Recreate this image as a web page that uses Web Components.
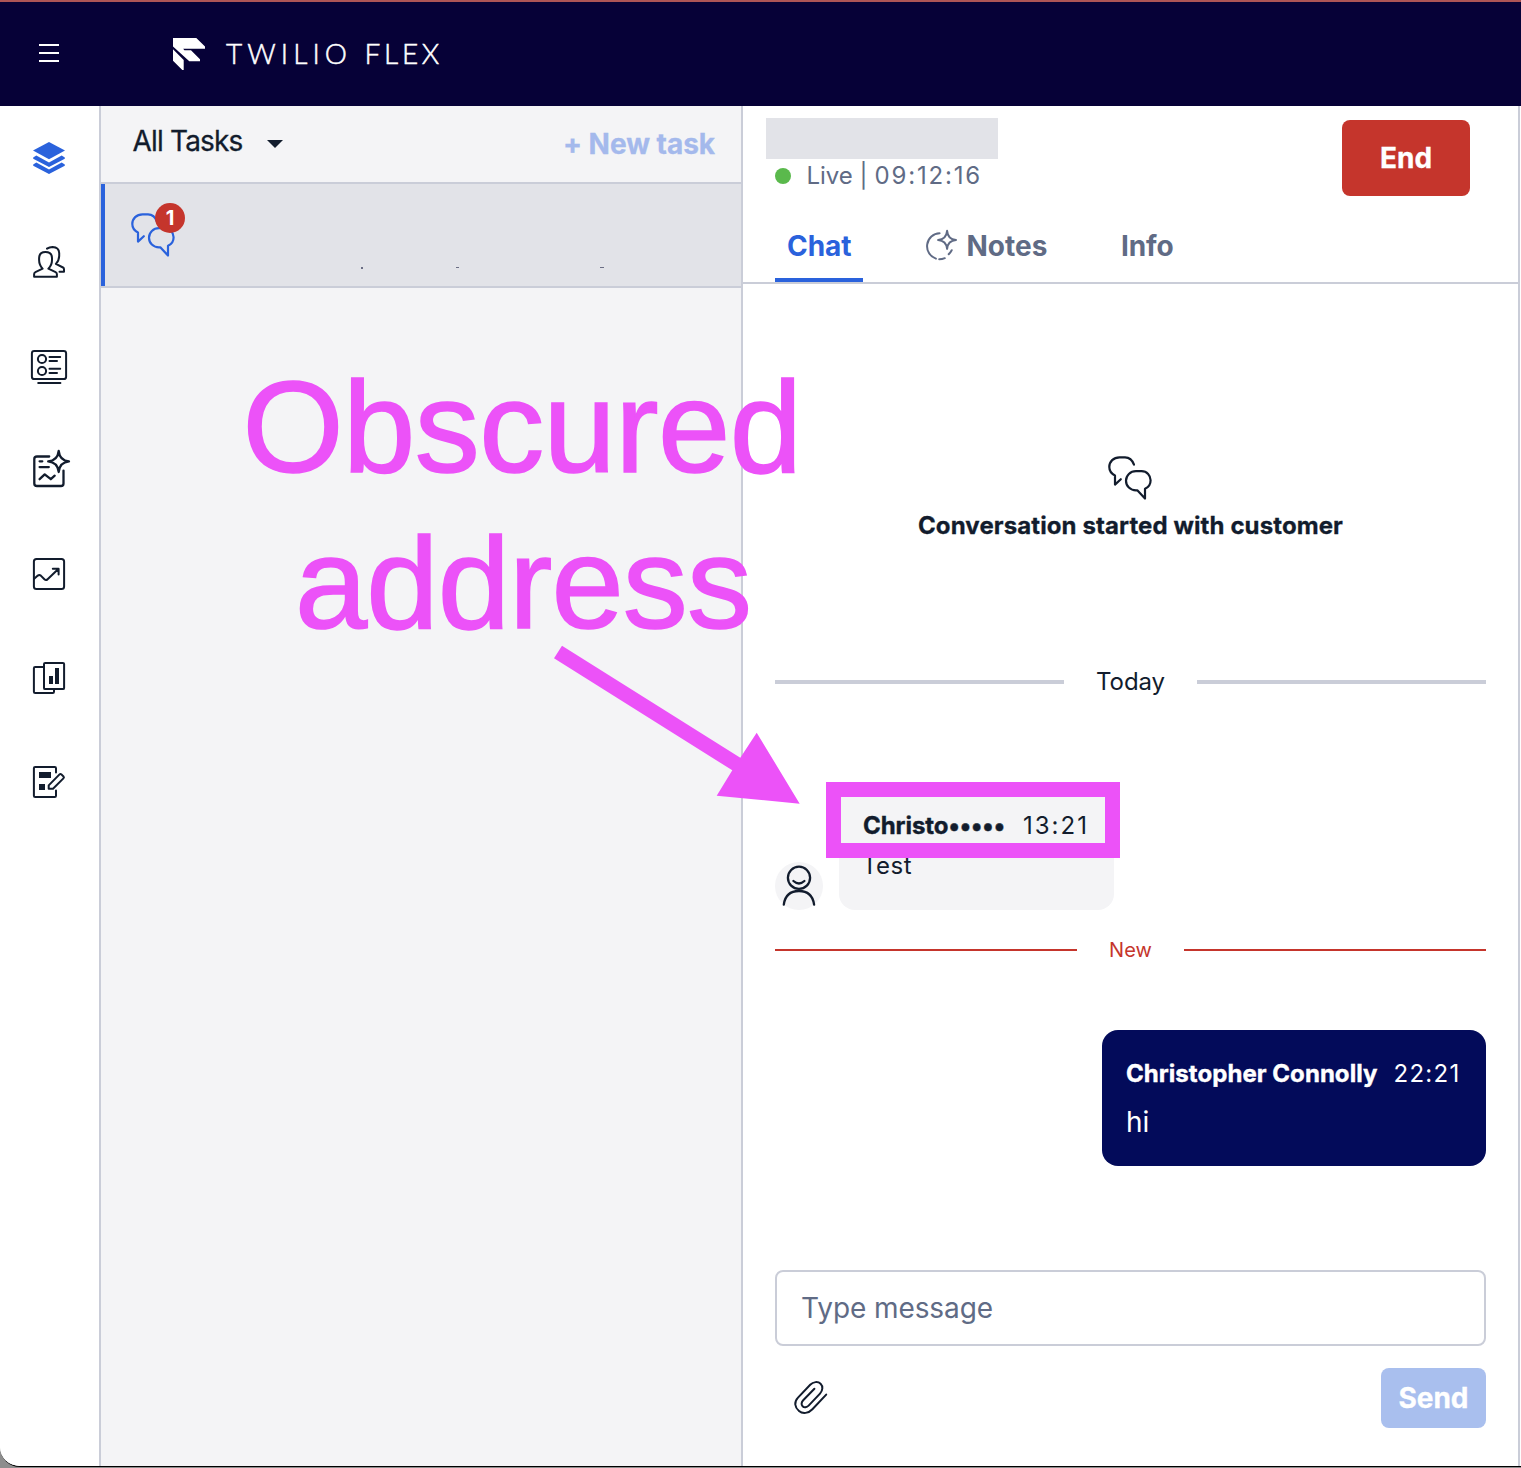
<!DOCTYPE html>
<html lang="en">
<head>
<meta charset="utf-8">
<title>Twilio Flex</title>
<style>
html,body{margin:0;padding:0;background:#8d8d8d;font-family:Inter,"Liberation Sans",sans-serif;color:#121c2d}
body{width:1521px;height:1468px;overflow:hidden}
</style>
</head>
<body>
<flex-app></flex-app>
<script>
const define = (name, html, ready) => customElements.define(name, class extends HTMLElement {
  constructor() {
    super();
    this.attachShadow({ mode: 'open' });
  }
  connectedCallback() {
    if (this.shadowRoot.childNodes.length) return;
    const t = document.createElement('template');
    t.innerHTML = typeof html === 'function' ? html(this) : html;
    this.shadowRoot.append(t.content.cloneNode(true));
    if (ready) ready(this);
  }
});

/* Text label tracked to a given advance width */
define('ui-text', `<style>:host{display:block;white-space:pre;line-height:1;flex:none}</style><slot></slot>`, el => {
  const w = parseFloat(el.getAttribute('w'));
  el.style.width = 'max-content';
  const n = el.textContent.length;
  const natural = el.getBoundingClientRect().width;
  el.style.letterSpacing = ((w - natural) / n).toFixed(3) + 'px';
  el.style.width = w + 'px';
});

const bubbles = '<path d="M26 8.7C24.3 3.8 21 1.3 17 1.3H11.5C5.5 1.3 1.3 5.6 1.3 11C1.3 15.2 3.6 17.8 7 19.4V28.6L12.8 23.2M28 15.2H33.5C39 15.2 42.6 19.5 42.6 24.3C42.6 28.3 40.6 31.3 37 32.8V42.6L29.3 34.3H28C22.3 34.3 18 30 18 24.7C18 19.5 22.3 15.2 28 15.2Z"/>';
const ICONS = {
  layers: [44, '<g fill="currentColor" stroke="none"><path d="M22 6L38 14.4L22 23.2L6 14.4Z"/><path d="M6.2 21.4L9.3 19.6L22 26.5L34.7 19.6L37.8 21.4V22.8L22 31L6.2 22.8Z"/><path d="M6.2 28.4L9.3 26.6L22 33.5L34.7 26.6L37.8 28.4V29.8L22 38L6.2 29.8Z"/></g>'],
  people: [44, '<path d="M7.1 36.8V34.2Q7.1 32.8 8.4 32.2L15.6 28.7Q12.1 25 12.1 20V18Q12.3 12 18.4 12Q24.9 12 25 18V20Q25 25 21.4 28.7L28.6 32.2Q29.9 32.8 29.9 34.2V36.8ZM20 8.6Q22.4 6.9 25.6 6.9Q32 7.1 32.2 13V16Q32.1 20.4 28.9 23.9L36 27.5Q37 28 37 29.2V31.8H32.5"/>'],
  board: [44, '<rect x="4.9" y="6.9" width="34.2" height="28.2" rx="2.4"/><circle cx="15" cy="15" r="4.1"/><circle cx="15" cy="27" r="4.1"/><path d="M22.5 13H33.2M22.5 16.9H30M22.5 24.8H33.2M22.5 28.9H30M11.2 39H33.4"/>'],
  insight: [44, '<path d="M22.2 8.5H10Q7.3 8.5 7.3 11V35.4Q7.3 38 10 38H34Q36.5 38 36.5 35.4V22.6M12.6 13.3H15.3M12.6 19.1H21.8M12.6 31.2L17.7 26.4L23.8 31.2L27.7 27.7M31.7 2.8Q32.6 12.4 42 13.4Q32.6 14.4 31.7 24Q30.7 14.4 21.2 13.4Q30.7 12.4 31.7 2.8Z"/>'],
  trend: [44, '<rect x="6.9" y="6.9" width="30.2" height="30.2" rx="2.6"/><path d="M7.2 26.8L10.8 23.6Q12.3 22.4 13.8 23.6L17.4 27.3Q19 28.8 20.6 27.2L31.3 17M25.8 16.8H31.6V22.4"/>'],
  reports: [44, '<rect x="17" y="6.9" width="20.1" height="26.2" rx="1.2"/><path d="M17 11H8.2Q6.9 11 6.9 12.2V35.8Q6.9 37 8.2 37H25.8Q27 37 27 35.8V33.3"/><path d="M22 20H26V28H22ZM28 12H32V28H28Z" fill="currentColor" stroke="none"/>'],
  form: [44, '<path d="M29 12.5V8.2Q29 6.9 27.7 6.9H8.2Q6.9 6.9 6.9 8.2V35.8Q6.9 37 8.2 37H27.7Q29 37 29 35.8V30.4M21.7 28.7V25.4L32.3 14.6Q33.4 13.5 34.5 14.5L36.5 16.4Q37.4 17.4 36.4 18.4L26 28.7Z"/><path d="M12 12H24V18H12ZM12 24H18V30H12Z" fill="currentColor" stroke="none"/>'],
  bubbles: [44, bubbles],
  note: [32, '<path d="M14.6 3.3A13 13 0 0 0 10.9 28.6M14.2 29.3Q17.2 29.3 19.8 28.2M23.7 24.3Q25.6 22.3 26.7 20.2M22.1 .8Q22.8 9.2 31 10Q22.8 10.8 22.1 18.8Q21.3 10.8 13.1 10Q21.3 9.2 22.1 .8Z"/>'],
  clip: [36, '<path d="M34.2 14.6L20.4 29.2C16.4 33.4 10.8 34.2 7 31C2.6 27.2 1.8 22 6 17.6L18.2 4.8C21.2 1.6 26 1.2 28.6 3.8C31.2 6.4 30.8 10.6 28 13.6L16.6 25.6C14.8 27.4 12.2 27.8 10.6 26.2C9 24.6 9.4 22 11.2 20.2L22.4 8.8"/>'],
  avatar: [48, '<circle cx="24" cy="15.8" r="11.1"/><path d="M18.4 19Q24 24 29.4 19M8.8 42.6Q10.6 29 24 29Q37.2 29 39.1 42.6"/>'],
  logo: [32, '<path fill="currentColor" stroke="none" d="M0 0H23.3L32 8.6V10.7H10.2L11.4 12.3H18L27 21.3V23.3H16.3L0 8.5ZM0 11.3L10.7 22V32H9.3L0 22.7Z"/>'],
  menu: [20, '<path d="M0 2H20M0 10H20M0 18H20" stroke-linecap="butt"/>']
};
define('ui-icon', el => {
  const [s, body] = ICONS[el.getAttribute('name')];
  const sw = el.getAttribute('sw') || 2;
  return `<style>:host{display:block;flex:none;width:${s}px;height:${s}px}svg{display:block;overflow:visible}</style>
  <svg width="${s}" height="${s}" viewBox="0 0 ${s} ${s}" fill="none" stroke="currentColor" stroke-width="${sw}" stroke-linecap="round" stroke-linejoin="round">${body}</svg>`;
});

define('flex-header', `<style>
:host{display:flex;align-items:center;box-sizing:border-box;height:106px;background:#060137;border-top:2px solid #ad5556;color:#fff;padding:0 0 2px 39px;flex:none}
ui-icon[name=logo]{margin:2px 0 0 114px}
ui-text{font:300 28px/32px Lato,sans-serif;margin-left:21px;-webkit-text-stroke:.5px #fff}
ui-text+ui-text{margin-left:12.5px}
</style>
<ui-icon name="menu"></ui-icon><ui-icon name="logo"></ui-icon><ui-text w="126">TWILIO</ui-text><ui-text w="78.5">FLEX</ui-text>`);

define('nav-rail', `<style>
:host{display:flex;flex-direction:column;width:99px;border-right:2px solid #cacdd8;background:#fff;flex:none}
div{height:104px;width:98px;display:flex;align-items:center;justify-content:center}
.on{color:#2a62dc}
</style>
<div class="on"><ui-icon name="layers"></ui-icon></div>
<div><ui-icon name="people"></ui-icon></div>
<div><ui-icon name="board"></ui-icon></div>
<div><ui-icon name="insight" sw="2.3"></ui-icon></div>
<div><ui-icon name="trend"></ui-icon></div>
<div><ui-icon name="reports"></ui-icon></div>
<div><ui-icon name="form"></ui-icon></div>`);

define('task-item', `<style>
:host{display:flex;box-sizing:border-box;height:104px;background:#e2e3e8;box-shadow:inset 4px 0 #2a62dc;border-bottom:2px solid #cacdd8;padding:29px 0 0 30px}
.ic{position:relative;width:44px;height:44px;color:#2a62dc}
.badge{position:absolute;left:24px;top:-10px;width:30px;height:30px;border-radius:50%;background:#c5352c;color:#fff;display:flex;align-items:center;justify-content:center;font:700 20px/30px Inter,sans-serif}
.marks{display:flex;padding:54px 0 0 186px}
i{height:1px;background:#6b6e84}
</style>
<div class="ic"><ui-icon name="bubbles" sw="2.2"></ui-icon><span class="badge">1</span></div>
<div class="marks"><i style="width:2px;height:2px"></i><i style="width:3px;margin-left:93px"></i><i style="width:4px;margin-left:141px"></i></div>`);

define('task-list', `<style>
:host{display:flex;flex-direction:column;width:640px;border-right:2px solid #cacdd8;background:#f4f4f6;flex:none}
header{box-sizing:border-box;height:78px;border-bottom:2px solid #cacdd8;display:flex;align-items:flex-start;padding:17px 26px 0 31.5px}
.a{font:400 28px/37px Inter,sans-serif;-webkit-text-stroke:.3px}
.n{font:700 28px/42px Inter,sans-serif;color:#a4b9ec;margin-left:auto;-webkit-text-stroke:.3px}
svg{margin:17px 0 0 24px}
</style>
<header><ui-text class="a" w="110">All Tasks</ui-text><svg width="16" height="8" viewBox="0 0 16 8"><path d="M0 0H16L8 8Z" fill="#121c2d"/></svg><ui-text class="n" w="152">+ New task</ui-text></header>
<task-item></task-item>`);

define('chat-header', `<style>
:host{display:block;box-sizing:border-box;height:178px;border-bottom:2px solid #cacdd8}
.top{display:flex;justify-content:space-between;height:104px;padding:0 48px 0 23px}
.mask{width:232px;height:41px;background:#e2e3e8;margin-top:12px}
.live{display:flex;align-items:center;height:33px;padding-left:9px;color:#606b85;font:400 24px/33px Inter,sans-serif}
.dot{width:16px;height:16px;border-radius:50%;background:#5ab94c;margin-right:15.5px}
.live ui-text{line-height:33px}
.end{width:128px;height:76px;border-radius:8px;background:#c5352c;color:#fff;margin-top:14px;display:flex;justify-content:center}
.end ui-text{font:700 28px/76px Inter,sans-serif;-webkit-text-stroke:.3px;padding-left:1px}
nav{display:flex;height:72px;padding-left:32px;color:#606b85;font-weight:700;font-size:28px}
nav div{display:flex;padding:0 12px;box-sizing:border-box;height:72px}
nav ui-text{line-height:72px}
.on{color:#2a62dc;width:88px;border-bottom:4px solid #2a62dc}
.notes{margin-left:49.5px}
.notes ui-icon{margin:20px 10px 0 0}
.info{margin-left:49.5px}
</style>
<div class="top"><div><div class="mask"></div><div class="live"><span class="dot"></span><ui-text w="53">Live </ui-text><ui-text w="15">| </ui-text><ui-text w="107.5">09:12:16</ui-text></div></div>
<div class="end"><ui-text w="53">End</ui-text></div></div>
<nav><div class="on"><ui-text w="64.5">Chat</ui-text></div><div class="notes"><ui-icon name="note"></ui-icon><ui-text w="81">Notes</ui-text></div><div class="info"><ui-text w="52.5">Info</ui-text></div></nav>`);

define('chat-divider', `<style>
:host{display:flex;align-items:center;color:var(--c);gap:var(--gap,32px)}
i{flex:1;background:var(--l);height:var(--h)}
</style><i></i><slot></slot><i></i>`);

define('chat-log', `<style>
:host{display:flex;flex-direction:column;height:986px;padding:0 32px}
.intro{display:flex;flex-direction:column;align-items:center;padding-top:172px;height:210px}
.intro ui-icon{margin-right:2px}
.intro ui-text{font:700 24px/40px Inter,sans-serif;margin-top:6px;-webkit-text-stroke:.3px}
.today{--c:#121c2d;--l:#cacdd8;--h:4px;height:40px;margin-top:-4px;margin-bottom:80px;font-size:24px}
.today ui-text,.in ui-text,.out ui-text{line-height:40px}
.in{display:flex;align-items:flex-end;height:128px}
.av{width:48px;height:48px;border-radius:50%;background:#f4f4f6;margin-right:16px}
.b{box-sizing:border-box;width:275px;height:128px;border-radius:16px;background:#f4f4f6;padding:24px 23px 0 24px}
.row{display:flex;gap:18px;font-size:24px}
.row ui-text:first-child{font-weight:700;-webkit-text-stroke:.4px}
.in .t{font-size:24px;margin-left:-1px}
.new{--c:#c5352c;--l:#c5352c;--h:2px;height:40px;margin-top:20px;font-size:20px}
.new ui-text{line-height:40px}
.out{align-self:flex-end;box-sizing:border-box;width:384px;height:136px;border-radius:16px;background:#030b5a;color:#fff;padding:24px 24px 0;margin-top:60px}
.out .row{gap:16px}
.out .t{font-size:28px;margin-top:8px}
</style>
<div class="intro"><ui-icon name="bubbles" sw="2.2"></ui-icon><ui-text w="425">Conversation started with customer</ui-text></div>
<chat-divider class="today"><ui-text w="69">Today</ui-text></chat-divider>
<div class="in"><div class="av"><ui-icon name="avatar" sw="2.3"></ui-icon></div>
<div class="b"><div class="row"><ui-text w="142">Christo•••••</ui-text><ui-text w="66">13:21</ui-text></div><ui-text class="t" w="50">Test</ui-text></div></div>
<chat-divider class="new"><ui-text w="43">New</ui-text></chat-divider>
<div class="out"><div class="row"><ui-text w="251.5">Christopher Connolly</ui-text><ui-text w="67">22:21</ui-text></div><ui-text class="t" w="23">hi</ui-text></div>`);

define('chat-composer', `<style>
:host{display:block;padding:0 32px}
.f{box-sizing:border-box;height:76px;border:2px solid #cacdd8;border-radius:8px;padding-left:24px;color:#606b85;font-size:28px}
.f ui-text{line-height:73px}
.r{display:flex;justify-content:space-between;margin-top:22px;padding-left:17px}
.r ui-icon{margin-top:12px}
.s{width:105px;height:60px;border-radius:8px;background:#a9bfee;color:#fff;display:flex;justify-content:center;font-weight:700;font-size:28px;-webkit-text-stroke:.3px}
.s ui-text{line-height:60px}
</style>
<div class="f"><ui-text w="192">Type message</ui-text></div>
<div class="r"><ui-icon name="clip"></ui-icon><div class="s"><ui-text w="70">Send</ui-text></div></div>`);

define('chat-panel', `<style>:host{display:block;width:775px;background:#fff;border-right:2px solid #cacdd8;flex:none}</style>
<chat-header></chat-header><chat-log></chat-log><chat-composer></chat-composer>`);

/* Callout drawn over the interface */
define('callout-note', `<style>
:host{position:absolute;left:0;top:0;width:1521px;height:1468px;color:#ec52f8}
.t{position:absolute;left:240px;top:349px;width:564px;display:flex;flex-direction:column;align-items:center}
.t ui-text{font:400 130px/156px "Liberation Sans",sans-serif;-webkit-text-stroke:1.6px}
.t ui-text+ui-text{margin-left:2px}
.box{position:absolute;left:826px;top:782px;width:264px;height:46px;border:15px solid #ec52f8}
svg{position:absolute;left:554px;top:645px}
</style>
<div class="t"><ui-text w="559">Obscured</ui-text><ui-text w="456">address</ui-text></div>
<svg width="247" height="160" viewBox="554 645 247 160"><path fill="#ec52f8" d="M562 645.7L740.3 757.7L756.7 732.7L799.7 803.7L716.7 795.7L732.3 770.3L554 658.3Z"/></svg>
<div class="box"></div>`);

define('flex-app', `<style>
:host{display:flex;flex-direction:column;position:relative;width:1521px;height:1466px;background:#fff;border-bottom:1px solid #000;border-bottom-left-radius:20px;overflow:hidden}
main{display:flex;flex:1;min-height:0}
</style>
<flex-header></flex-header><main><nav-rail></nav-rail><task-list></task-list><chat-panel></chat-panel></main><callout-note></callout-note>`);
</script>
</body>
</html>
